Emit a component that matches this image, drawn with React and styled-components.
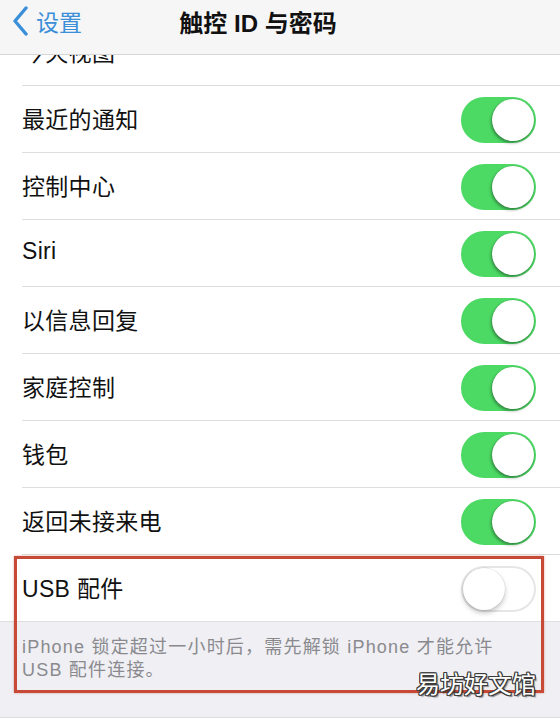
import React from 'react'
import styled, { createGlobalStyle } from 'styled-components'

const GlobalStyle = createGlobalStyle`
  html, body {
    margin: 0;
    padding: 0;
    background: #ffffff;
  }
  body {
    font-family: "Liberation Sans", "Noto Sans CJK SC", sans-serif;
    -webkit-font-smoothing: antialiased;
  }
`

const Screen = styled.div`
  width: 560px;
  height: 719px;
  display: flex;
  flex-direction: column;
  overflow: hidden;
  background: #ffffff;
  position: relative;
`

const NavBar = styled.div`
  height: 55px;
  flex-shrink: 0;
  display: grid;
  grid-template-columns: 1fr auto 1fr;
  align-items: center;
  padding-bottom: 12px;
  box-sizing: border-box;
  background: #f6f6f6;
  border-bottom: 1px solid #d6d6d6;
  position: relative;
  z-index: 2;
`

const Back = styled.div`
  display: flex;
  align-items: center;
  gap: 7px;
  padding-left: 11px;
  color: #3b8fd9;
  font-size: 23px;
`

const Title = styled.div`
  font-size: 24px;
  font-weight: 600;
  color: #111;
  letter-spacing: 0;
  margin-left: -44px;
`

const Viewport = styled.div`
  flex: 1;
  overflow: hidden;
  display: flex;
  flex-direction: column;
`

const List = styled.div`
  display: flex;
  flex-direction: column;
  margin-top: -36px;
`

const Row = styled.div`
  height: 67px;
  display: flex;
  align-items: center;
  justify-content: space-between;
  padding: 0 24px 4px 22px;
  position: relative;
  box-sizing: border-box;

  &::after {
    content: '';
    position: absolute;
    left: ${p => (p.$full ? '0' : '22px')};
    right: 0;
    bottom: 0;
    height: 1px;
    background: #dedede;
  }
`

const Label = styled.span`
  font-size: 23px;
  color: #111;
  letter-spacing: 0.3px;
`

const Track = styled.div`
  width: 75px;
  height: 46px;
  margin-top: 4px;
  border-radius: 23px;
  box-sizing: border-box;
  background: ${p => (p.$on ? '#4cd964' : '#ffffff')};
  border: 2px solid ${p => (p.$on ? '#4cd964' : '#e6e6e6')};
  display: flex;
  align-items: center;
  justify-content: ${p => (p.$on ? 'flex-end' : 'flex-start')};
`

const Knob = styled.div`
  width: 42px;
  height: 42px;
  border-radius: 50%;
  background: #ffffff;
  box-shadow: ${p => (p.$on
    ? '-1px 2px 3px rgba(0,0,0,0.35), 0 0 0 0.5px rgba(0,0,0,0.12)'
    : '0 3px 5px rgba(0,0,0,0.22), 0 0 0 0.5px rgba(0,0,0,0.1)')};
`

const Section = styled.div`
  position: relative;
  display: flex;
  flex-direction: column;
`

const Footer = styled.div`
  background: #efeff4;
  padding: 14px 20px 0 22px;
  height: 96px;
  box-sizing: border-box;
  font-size: 18px;
  line-height: 23px;
  letter-spacing: 1.2px;
  color: #8a8a8e;
  border-bottom: 1px solid #dcdcdc;
  white-space: nowrap;
`

const Highlight = styled.div`
  position: absolute;
  left: 14px;
  top: 1px;
  width: 530px;
  height: 137px;
  box-sizing: border-box;
  border: 3px solid #c64a36;
  box-shadow: 0 0 2px rgba(198, 74, 54, 0.5);
  pointer-events: none;
`

const Watermark = styled.div`
  position: absolute;
  right: 24px;
  bottom: 19px;
  font-size: 24px;
  font-family: "Noto Sans CJK SC", sans-serif;
  color: #ffffff;
  letter-spacing: 0;
  text-shadow:
    1px 0 0 #3a3a3a, -1px 0 0 #3a3a3a, 0 1px 0 #3a3a3a, 0 -1px 0 #3a3a3a,
    1px 1px 0 #3a3a3a, -1px -1px 0 #3a3a3a, 1px -1px 0 #3a3a3a, -1px 1px 0 #3a3a3a,
    2px 2px 1px rgba(0,0,0,0.4);
`

const Chevron = () => (
  <svg width="18" height="30" viewBox="0 0 18 30">
    <path d="M15 2 L4 15 L15 28" fill="none" stroke="#3b8fd9" strokeWidth="3.4" strokeLinecap="round" strokeLinejoin="round" />
  </svg>
)

const Toggle = ({ on }) => (
  <Track $on={on}>
    <Knob $on={on} />
  </Track>
)

const items = [
  { label: '今天视图', hidden: true },
  { label: '最近的通知' },
  { label: '控制中心' },
  { label: 'Siri' },
  { label: '以信息回复' },
  { label: '家庭控制' },
  { label: '钱包' },
  { label: '返回未接来电' },
]

export default function App() {
  return (
    <Screen>
      <GlobalStyle />
      <NavBar>
        <Back>
          <Chevron />
          设置
        </Back>
        <Title>触控 ID 与密码</Title>
        <div />
      </NavBar>
      <Viewport>
        <List>
          {items.map(item => (
            <Row key={item.label}>
              <Label>{item.label}</Label>
              {!item.hidden && <Toggle on />}
            </Row>
          ))}
          <Section>
            <Row $full>
              <Label>USB 配件</Label>
              <Toggle on={false} />
            </Row>
            <Footer>
              iPhone 锁定超过一小时后，需先解锁 iPhone 才能允许
              <br />
              USB 配件连接。
            </Footer>
            <Highlight />
          </Section>
        </List>
      </Viewport>
      <Watermark>易坊好文馆</Watermark>
    </Screen>
  )
}
